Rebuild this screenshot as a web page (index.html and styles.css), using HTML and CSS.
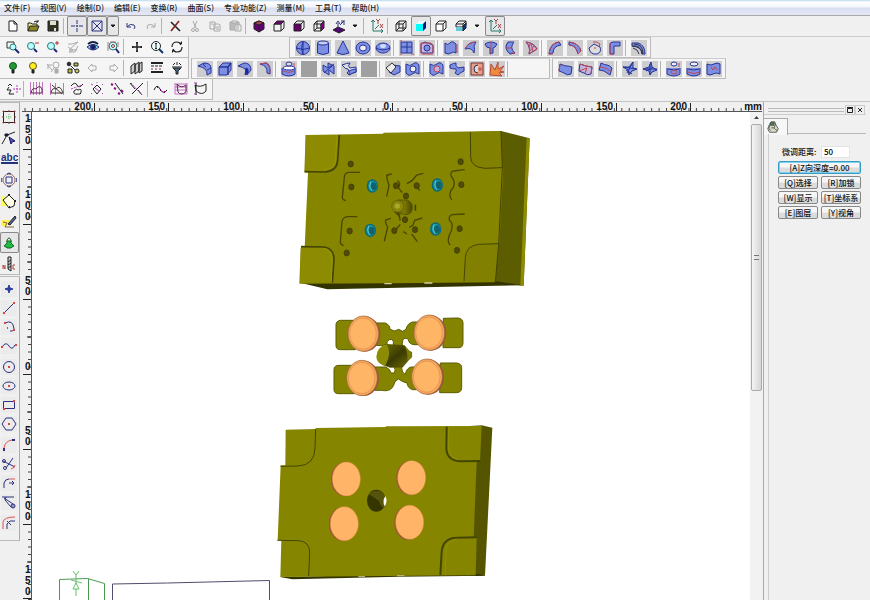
FILE: index.html
```html
<!DOCTYPE html>
<html lang="zh-CN">
<head>
<meta charset="utf-8">
<title>CAD</title>
<link rel="stylesheet" href="styles.css">
</head>
<body>
<nav class="menu">
<a href="#">文件(F)</a><a href="#">视图(V)</a><a href="#">绘制(D)</a><a href="#">编辑(E)</a><a href="#">变换(R)</a><a href="#">曲面(S)</a><a href="#">专业功能(Z)</a><a href="#">测量(M)</a><a href="#">工具(T)</a><a href="#">帮助(H)</a>
</nav>

<header class="bars">
<div class="row">
<div class="band open">
<button aria-label="新建"><svg viewBox="0 0 16 16"><path d="M4 3h5l3 3v7H4zM9 3v3h3" fill="#fff"/></svg></button>
<button aria-label="打开"><svg viewBox="0 0 16 16"><path d="M3 13V5h3l1 1h5v2" fill="#ee9"/><path d="M3 13l2-5h9l-2 5z" fill="#882"/><path d="M9 4q2-2 4 0M13 2v2h-2"/></svg></button>
<button aria-label="保存"><svg viewBox="0 0 16 16"><path d="M3 3h10v10H3z" fill="#332"/><path d="M5 3h6v4H5z" fill="#dee0d0" stroke="none"/><path d="M9 10h2v3H9z" fill="#ddd" stroke="none"/></svg></button>
<i class="sep"></i>
<button class="on" aria-label="十字光标"><svg viewBox="0 0 16 16" class="navy"><path d="M8 2v4M8 7v2M8 10v4M2 8h4M10 8h4M7 8h2"/></svg></button>
<button class="on" aria-label="捕捉"><svg viewBox="0 0 16 16" class="navy"><path d="M3 3h10v10H3zM3 3l10 10M13 3L3 13"/></svg></button>
<button class="drop on" aria-label="捕捉选项"><svg viewBox="0 0 8 16"><path d="M2 7h4L4 9z" fill="#111"/></svg></button>
<button aria-label="撤销"><svg viewBox="0 0 16 16" class="navy"><path d="M4 5v4h4M4 9q3-4 7-2 2 2 0 4"/></svg></button>
<button aria-label="重做"><svg viewBox="0 0 16 16" class="dim"><path d="M12 5v4H8M12 9Q9 5 5 7q-2 2 0 4"/></svg></button>
<i class="sep"></i>
<button aria-label="删除"><svg viewBox="0 0 16 16"><path d="M4 4l9 9" stroke="#222" stroke-width="1.6"/><path d="M12 3l-8 10" stroke="#822" stroke-width="1.6"/></svg></button>
<button aria-label="剪切"><svg viewBox="0 0 16 16" class="dim"><path d="M6 3l3 7M10 3l-3 7"/><circle cx="6" cy="12" r="1.5"/><circle cx="10" cy="12" r="1.5"/></svg></button>
<button aria-label="复制"><svg viewBox="0 0 16 16" class="dim"><path d="M3 4h5v7H3zM7 6h5l1 1v6H7zM9 9h3M9 11h3M4 6h2"/></svg></button>
<button aria-label="粘贴"><svg viewBox="0 0 16 16" class="dim"><path d="M3 4h9v8H3z" fill="#bbb"/><path d="M5 3h5v2H5zM8 7h6v6H8z" fill="#eee"/><path d="M9 9h3M9 11h3"/></svg></button>
<i class="sep"></i>
<button aria-label="着色视图"><svg viewBox="0 0 16 16"><path d="M3 5l5-2 5 2v6l-5 3-5-3z" fill="#607"/><path d="M3 5l5 2 5-2-5-2z" fill="#a45"/><path d="M8 7v7"/></svg></button>
<button aria-label="顶视图"><svg viewBox="0 0 16 16"><path d="M3 6h7v7H3zM10 6l3-3v7l-3 3"/><path d="M3 6l3-3h7l-3 3z" fill="#707"/></svg></button>
<button aria-label="前视图"><svg viewBox="0 0 16 16"><path d="M3 6l3-3h7v7l-3 3M13 3l-3 3"/><path d="M3 6h7v7H3z" fill="#606"/></svg></button>
<button aria-label="右视图"><svg viewBox="0 0 16 16"><path d="M3 6h7v7H3zM3 6l3-3h7M6 3v7h4M3 13l3-3"/><path d="M10 6l3-3v7l-3 3z" fill="#808"/></svg></button>
<button aria-label="工作平面"><svg viewBox="0 0 16 16"><path d="M2 12l5-3 7 3-6 3z" fill="#507"/><path d="M7 12V5M5 6l2-3 2 3M9 7l4-4M11 2v3M13 2v5" stroke="#337"/></svg></button>
<button class="drop" aria-label="平面选项"><svg viewBox="0 0 8 16"><path d="M2 7h4L4 9z" fill="#111"/></svg></button>
<i class="sep"></i>
<button aria-label="坐标轴"><svg viewBox="0 0 16 16"><path d="M4 2v11h10M2 4l2-2 2 2M12 11l2 2-2 2M6 11l4-4" stroke="#276"/><path d="M7 1l2 2 2-2M9 3v3M11 6l3 4M14 6l-3 4" stroke="#a44"/></svg></button>
<i class="sep"></i>
<button aria-label="线框"><svg viewBox="0 0 16 16"><path d="M3 6h7v7H3zM6 3h7v7H6zM3 6l3-3M10 6l3-3M10 13l3-3M3 13l3-3"/></svg></button>
<button class="on" aria-label="着色"><svg viewBox="0 0 16 16" class="flat"><path d="M3 6h7v7H3z" fill="#0ff"/><path d="M3 6l3-3h7l-3 3z" fill="#dff"/><path d="M10 6l3-3v7l-3 3z" fill="#018"/></svg></button>
<button aria-label="消隐"><svg viewBox="0 0 16 16"><path d="M3 6h7v7H3zM3 6l3-3h7l-3 3M13 3v7l-3 3" fill="#fff"/></svg></button>
<button aria-label="半着色"><svg viewBox="0 0 16 16"><path d="M3 6l3-3h7l-3 3zM3 6v3h7V6M13 3v4"/><path d="M3 9h7v4H3z" fill="#6cd" stroke="none"/><path d="M10 8l3-3v5l-3 3z" fill="#138"/></svg></button>
<button class="drop" aria-label="显示选项"><svg viewBox="0 0 8 16"><path d="M2 7h4L4 9z" fill="#111"/></svg></button>
<button class="on" aria-label="显示坐标"><svg viewBox="0 0 16 16"><path d="M4 2v11h10M2 4l2-2 2 2M12 11l2 2-2 2M6 11l4-4" stroke="#276"/><path d="M7 1l2 2 2-2M9 3v3M11 6l3 4M14 6l-3 4" stroke="#a44"/></svg></button>
</div>
</div>

<div class="row">
<div class="band">
<button aria-label="窗口缩放"><svg viewBox="0 0 16 16"><path d="M2 3h7v6H2z" stroke="#333"/><circle cx="8" cy="8" r="3" fill="#bff" stroke="#277"/><path d="M10 10l4 4" stroke="#227" stroke-width="2"/></svg></button>
<button aria-label="缩小"><svg viewBox="0 0 16 16"><circle cx="6" cy="7" r="3.500" fill="#bff" stroke="#277"/><path d="M9 10l3 3" stroke="#227" stroke-width="2"/><path d="M10 4h4" stroke="#a33"/></svg></button>
<button aria-label="放大"><svg viewBox="0 0 16 16"><circle cx="6" cy="7" r="3.500" fill="#bff" stroke="#277"/><path d="M9 10l3 3" stroke="#227" stroke-width="2"/><path d="M10 4h4M12 2v4" stroke="#a33"/></svg></button>
<button aria-label="上一视图"><svg viewBox="0 0 16 16" class="dim"><path d="M3 5h4l6-2-9 8h8M3 8l5 3-4 2h6l3-6"/></svg></button>
<button aria-label="观察"><svg viewBox="0 0 16 16" class="navy"><path d="M2 8q6-5 12 0-6 6-12 0" fill="#8ce"/><circle cx="8" cy="8" r="2.500" fill="#125"/><path d="M3 5q5-4 10 0" stroke-width="2" stroke="#124"/></svg></button>
<button aria-label="全部缩放"><svg viewBox="0 0 16 16"><circle cx="8" cy="7" r="4" fill="#bff" stroke="#377"/><path d="M3 3v9M13 3v5M5 3h6" stroke="#a77"/><path d="M11 10l3 4" stroke="#227" stroke-width="2"/><circle cx="8" cy="7" r="1.500" stroke="#a33"/></svg></button>
<i class="sep"></i>
<button aria-label="平移"><svg viewBox="0 0 16 16"><path d="M8 3v10M3 8h10" stroke-width="1.500"/><path d="M7 4l1-1 1 1zM7 12l1 1 1-1zM4 7L3 8l1 1zM12 7l1 1-1 1z" fill="#222"/></svg></button>
<button aria-label="动态缩放"><svg viewBox="0 0 16 16"><circle cx="7" cy="7" r="4.500" fill="#eff"/><path d="M7 4v6M6 5l1-1 1 1M6 9l1 1 1-1"/><path d="M10 10l4 4" stroke="#136" stroke-width="2"/></svg></button>
<button aria-label="旋转"><svg viewBox="0 0 16 16"><path d="M3 8q0-5 5-5 3 0 4 3M13 8q0 5-5 5-3 0-4-3" stroke-width="1.200"/><path d="M10 5h3V2zM6 11H3v3z" fill="#222" stroke="none"/></svg></button>
</div>
<div class="band start far">
<button class="s" aria-label="球"><svg viewBox="0 0 16 16"><circle cx="8" cy="8" r="6.500" class="f"/><path d="M1.500 8q6.500 3 13 0M8 1.500q-3 6 0 13M8 2v12"/></svg></button>
<button class="s" aria-label="圆柱"><svg viewBox="0 0 16 16"><path d="M2.500 3v10q5.500 3 11 0V3" class="f"/><ellipse cx="8" cy="3" rx="5.500" ry="2" fill="#c4cdf2"/></svg></button>
<button class="s" aria-label="圆锥"><svg viewBox="0 0 16 16"><path d="M8 1L2 13q6 3 12 0z" class="f"/></svg></button>
<button class="s" aria-label="圆环"><svg viewBox="0 0 16 16"><ellipse cx="8" cy="8" rx="7" ry="6" class="f"/><ellipse cx="8" cy="8" rx="3.500" ry="3" fill="#eee"/></svg></button>
<button class="s" aria-label="椭球"><svg viewBox="0 0 16 16"><ellipse cx="8" cy="8" rx="7" ry="5" class="f"/><ellipse cx="8" cy="6" rx="3" ry="2" fill="#cdf" stroke="none"/><path d="M1 8q7 4 14 0"/></svg></button>
<i class="sep"></i>
<button class="s" aria-label="平面"><svg viewBox="0 0 16 16"><path d="M2 2h11v11H2z" class="f"/><path d="M2 7h11M8 2v11"/><path d="M1 1h2M12 14h3M1 14h2" class="r"/></svg></button>
<button class="s" aria-label="裁剪平面"><svg viewBox="0 0 16 16"><path d="M2 13V4l4-2 8 3v8z" class="g"/><circle cx="8" cy="8" r="3" class="f"/><path d="M2 13V3h10l2 3v7M3 14h11" class="r"/></svg></button>
<i class="sep"></i>
<button class="s" aria-label="拉伸面"><svg viewBox="0 0 16 16"><path d="M2 3q3 3 5 0t6 1v9q-3-2-5 0t-6 0z" class="f"/><path d="M14 4v9" class="r"/></svg></button>
<button class="s" aria-label="直纹面"><svg viewBox="0 0 16 16"><path d="M2 9q3-7 11-7l-2 4q1 3 0 7-2-6-9-4z" class="f"/><path d="M2 9q3-7 11-7" class="r"/></svg></button>
<button class="s" aria-label="旋转面"><svg viewBox="0 0 16 16"><path d="M2 4q6-4 12 0-2 4-4 4v5l-3 1V8Q3 8 2 4z" class="f"/><path d="M8 2v12" class="r"/></svg></button>
<button class="s" aria-label="扫掠面"><svg viewBox="0 0 16 16"><path d="M5 2h6q-5 6 1 11l-5 1q-7-6-2-12z" class="f"/><path d="M3 8h6M10 3l1-1M8 13h4" class="r"/></svg></button>
<button class="s" aria-label="网格面"><svg viewBox="0 0 16 16"><path d="M3 2q8 1 11 7l-8 5Q8 7 3 2z" class="g"/><path d="M3 2q8 1 11 7l-8 5Q8 7 3 2zM7 4l-1 4M11 6l-4 5M8 4l2 7" class="r"/></svg></button>
<i class="sep"></i>
<button class="s" aria-label="单轨扫掠"><svg viewBox="0 0 16 16"><path d="M2 14Q3 3 12 2l2 3q-8 1-8 8z" class="f"/><path d="M2 14Q3 3 12 2M2 14h4" class="r"/></svg></button>
<button class="s" aria-label="双轨扫掠"><svg viewBox="0 0 16 16"><path d="M2 2q10 1 12 9l-3 3Q9 5 2 5z" class="f"/><path d="M2 2q10 1 12 9l-3 3Q9 5 2 5" class="r"/></svg></button>
<button class="s" aria-label="边界面"><svg viewBox="0 0 16 16"><path d="M2 8l5-4 6 3q2 5-3 7-7 1-8-6z" fill="#ddd"/><path d="M6 2q4-1 7 2l-1 3M8 7v2" class="r"/></svg></button>
<button class="s" aria-label="管道面"><svg viewBox="0 0 16 16"><path d="M3 14V5q0-3 3-3h7v4H7v8z" class="f"/><path d="M3 14h4M3 3v11" class="r"/></svg></button>
<i class="sep"></i>
<button class="s" aria-label="等距面"><svg viewBox="0 0 16 16"><path d="M1 3h6q7 2 7 11h-3Q11 7 1 6z" class="f"/><path d="M1 6q9-1 10 8M3 4q9 0 9 10M2 8q5 1 6 6" stroke="#334"/></svg></button>
</div>
</div>

<div class="row">
<div class="band">
<button aria-label="显示对象"><svg viewBox="0 0 16 16"><circle cx="8" cy="6" r="3.500" fill="#293" stroke="#152"/><path d="M7 10h2v3H7z" fill="#131"/></svg></button>
<button aria-label="点亮"><svg viewBox="0 0 16 16"><circle cx="8" cy="6" r="3.500" fill="#fe2" stroke="#552"/><path d="M7 10h2v3H7z" fill="#222"/></svg></button>
<button aria-label="拾取隐藏"><svg viewBox="0 0 16 16" class="dim"><path d="M2 4l5 6M3 9V5h4M6 12l4-5"/><circle cx="11" cy="5" r="3"/><path d="M10 9h3v4h-3z" fill="#aaa"/></svg></button>
<button aria-label="切换显示"><svg viewBox="0 0 16 16"><circle cx="4" cy="4" r="1.800" fill="#333"/><path d="M9 3h4v3H9zM3 9h4v4H3z" fill="#bb4"/><circle cx="12" cy="11" r="2" fill="#cc6"/><path d="M8 8l2 2M6 6l2 2"/></svg></button>
<button aria-label="后退"><svg viewBox="0 0 16 16" class="dim"><path d="M3 8l4-4v2h4v4H7v2z"/></svg></button>
<button aria-label="前进"><svg viewBox="0 0 16 16" class="dim"><path d="M13 8L9 4v2H5v4h4v2z"/></svg></button>
<i class="sep"></i>
<button aria-label="图层"><svg viewBox="0 0 16 16"><path d="M2 6l4-3v8l-4 3zM6 5l4-3v9l-4 3zM10 4l3-2v9l-3 2z" fill="#ccc"/></svg></button>
<button aria-label="线型"><svg viewBox="0 0 16 16"><path d="M2 3h12M2 12h12" stroke-width="2"/><path d="M2 6h12" stroke-dasharray="3 1"/><path d="M2 9h12" stroke-dasharray="2 2" stroke="#835"/></svg></button>
<button aria-label="过滤"><svg viewBox="0 0 16 16"><path d="M4 8h8l-3 3v3H7v-3z" fill="#468"/><path d="M4 5l2-2M8 5V2M12 5l-2-2M3 7h10"/></svg></button>
</div>
<div class="band start near">
<button class="s" aria-label="圆角过渡"><svg viewBox="0 0 16 16"><path d="M1 5l6-3q7 0 7 5v5l-4 2q1-7-9-9z" class="f"/><path d="M10 9l4-2M7 2q-2 2 2 4"/></svg></button>
<button class="s" aria-label="盒体"><svg viewBox="0 0 16 16"><path d="M2 6l4-4h8v7l-4 5H2z" class="f"/><path d="M2 6h9l3-4M11 6v8" stroke-width="1.500"/></svg></button>
<button class="s" aria-label="边过渡"><svg viewBox="0 0 16 16"><path d="M1 5l6-3q7 0 7 7l-4 5q1-7-9-9z" class="f"/><path d="M9 7l-1 7 3-2V8z" fill="#12259a"/></svg></button>
<button class="s" aria-label="变半径过渡"><svg viewBox="0 0 16 16"><path d="M3 3l6-1q5 1 4 11l-3-1q1-7-7-9z" class="f"/><path d="M3 3l6-1q4 1 4 11" class="r"/></svg></button>
<i class="sep"></i>
<button class="s" aria-label="抽壳"><svg viewBox="0 0 16 16"><path d="M1 7v6q7 4 13 0V7" class="f"/><ellipse cx="8" cy="7" rx="6" ry="2" fill="#fff"/><ellipse cx="8" cy="3" rx="3" ry="2" fill="#ddd"/><path d="M2 10q6 3 11 0M13 2v4" class="r"/></svg></button>
<button class="s blank" aria-label="备用一"><svg viewBox="0 0 16 16"></svg></button>
<button class="s" aria-label="面裁剪"><svg viewBox="0 0 16 16"><path d="M2 4l5 3V2l6 3v8l-5-4v5l-6-4z" class="f"/><path d="M7 7l6-4M3 12l8-7"/></svg></button>
<button class="s" aria-label="面延伸"><svg viewBox="0 0 16 16"><path d="M1 4q5-2 8-2-3 3 0 5l6-1v5q-4 1-7 3l-2-2q3-2 1-4-3 0-4-2z" fill="#ddd"/><path d="M8 10q4-2 7-2v3q-4 1-7 3z" class="f"/></svg></button>
<button class="s blank" aria-label="备用二"><svg viewBox="0 0 16 16"></svg></button>
<i class="sep"></i>
<button class="s" aria-label="旋转裁剪"><svg viewBox="0 0 16 16"><path d="M8 4l7 1v6l-6 3-5-3z" class="f"/><path d="M7 2l4 4-5 6-5-5z" fill="#eee" stroke="#333"/></svg></button>
<button class="s" aria-label="面打孔"><svg viewBox="0 0 16 16"><path d="M1 3q4 3 7 0t6 1v9q-4-3-7 0t-6-1z" class="f"/><circle cx="8" cy="8" r="3" fill="#eee"/></svg></button>
<i class="sep"></i>
<button class="s" aria-label="面补孔"><svg viewBox="0 0 16 16"><path d="M1 3q4 3 7 0t6 1v9q-4-3-7 0t-6-1z" class="f"/><circle cx="8" cy="8" r="3" class="g r"/></svg></button>
<button class="s" aria-label="面连接"><svg viewBox="0 0 16 16"><path d="M1 4q4-2 6-2-1 3 2 5l6-1v4q-3 1-6 4l-3-2q2-2 1-4-4 0-6-1z" class="f"/></svg></button>
<button class="s" aria-label="取消裁剪"><svg viewBox="0 0 16 16"><path d="M2 2h12v12H2z" fill="#e9a088" stroke="#733"/><path d="M9 4q-4 0-4 4t4 4" stroke="#235" fill="#ddd"/><path d="M9 8h4M11 6v4" class="r"/></svg></button>
<button class="s" aria-label="炸开"><svg viewBox="0 0 16 16"><path d="M1 14l1-11 4 6 3-8v7l6-3-4 5 4 1-5 1 3 3z" fill="#f08a40" stroke="#b64a30"/></svg></button>
<i class="sep"></i>
</div>
<div class="band start last">
<button class="s" aria-label="面一"><svg viewBox="0 0 16 16"><path d="M2 3q5 2 7 2t5 1l-1 7q-4 2-7-1-2-1-5-2z" class="f"/><path d="M2 3l-1 7" class="r"/></svg></button>
<button class="s" aria-label="面二"><svg viewBox="0 0 16 16"><path d="M2 3l6 2 6 1-1 7q-4 2-7-1l-5-2z" class="g"/><path d="M2 3l6 2 6 1-1 7M1 10l8-3-2 5" class="r"/></svg></button>
<button class="s" aria-label="面三"><svg viewBox="0 0 16 16"><path d="M3 2q4 2 6 2t5 3l-2 7-6-4-5-1z" class="f"/><path d="M2 6q8 1 11 5" class="r"/></svg></button>
<i class="sep"></i>
<button class="s" aria-label="相交一"><svg viewBox="0 0 16 16"><path d="M1 6l6 0 4-5v6l4 1-5 2-3 4-1-5z" class="f"/><path d="M1 6l13 2M11 1L5 12M4 9l6 4"/></svg></button>
<button class="s" aria-label="相交二"><svg viewBox="0 0 16 16"><path d="M1 8l6-2 2-5 1 5 5 3-5 2-2 3-1-4z" class="f"/><path d="M2 8h13M8 3v11M4 10l7-4"/></svg></button>
<i class="sep"></i>
<button class="s" aria-label="实体一"><svg viewBox="0 0 16 16"><path d="M1 7v6q7 4 13 0V7" class="f"/><ellipse cx="8" cy="3" rx="3" ry="2" fill="#eee"/><path d="M2 8q6 2 11 0"/><ellipse cx="8" cy="11" rx="3" ry="2" class="r"/><path d="M13 2v4" class="r"/></svg></button>
<button class="s" aria-label="实体二"><svg viewBox="0 0 16 16"><path d="M1 7v6q7 4 13 0V7" class="f"/><ellipse cx="8" cy="3" rx="4" ry="2" fill="#eee"/><path d="M2 8q6 2 11 0"/><path d="M2 11q6 3 12 0" class="r"/></svg></button>
<button class="s" aria-label="实体三"><svg viewBox="0 0 16 16"><path d="M1 3q4 2 7 0t6 0v10q-4-2-7 0t-6 0z" class="f"/><path d="M5 6l2 3 2-3 2 3" class="r"/></svg></button>
</div>
</div>

<div class="row">
<div class="band">
<button aria-label="点变换"><svg viewBox="0 0 16 16"><path d="M3 5l2-2 2 2M4 6l-2 3h4l-2 4h5"/><path d="M12 4v9M8 8h8" stroke="#b4b" stroke-dasharray="2 1"/></svg></button>
<i class="sep"></i>
<button aria-label="阵列一"><svg viewBox="0 0 16 16" class="pink"><path d="M1.500 1v13M4.500 1v13M7.500 1v13M10.500 1v13M13.500 1v13"/><path d="M2 12q1-6 5-4 4-5 6 0v4z" stroke="#625"/></svg></button>
<button aria-label="阵列二"><svg viewBox="0 0 16 16" class="pink"><path d="M1.500 2v12M14.500 2v12M6.500 2v12"/><path d="M2 12q1-6 5-4 4-5 7 4zM3 4l10 9" stroke="#433"/></svg></button>
<button aria-label="轮廓"><svg viewBox="0 0 16 16"><path d="M2 5q4-5 6-1t6-1M5 10q3-3 4-1 4-2 3 2 0 3-3 2-5 1-4-3"/><path d="M2 8l11-4" stroke="#b4b" stroke-dasharray="2 1"/></svg></button>
<button aria-label="点阵"><svg viewBox="0 0 16 16"><path d="M4 8l4-4 4 4-4 5z"/><path d="M2 3l2 1M8 1v1M13 3l1 1M2 12l1 1M13 12l1 1M6 7l4 3" stroke="#b4b"/></svg></button>
<button aria-label="等分"><svg viewBox="0 0 16 16"><path d="M6 2l8 11"/><path d="M2 3l2 1M5 7l2 1M9 12l2 1M12 9l2 2" stroke="#818" stroke-width="2"/></svg></button>
<button aria-label="打断"><svg viewBox="0 0 16 16"><path d="M1 2l5 6M9 9l4 5M14 2L3 13"/><path d="M2 2l11 12" stroke="#a3a" stroke-dasharray="2 1"/></svg></button>
<i class="sep"></i>
<button aria-label="样条"><svg viewBox="0 0 16 16"><path d="M1 9q3-7 6-1t7 1"/><path d="M4 6h1M7 9h1M11 11h1" stroke="#707" stroke-width="2"/></svg></button>
<button aria-label="曲线投影"><svg viewBox="0 0 16 16" class="pink"><path d="M2 2v11h12V2M2 3h12M2 6h12M2 9h12"/><path d="M4 3q4 5 9 1v7q-5 4-8 0z" stroke="#625"/></svg></button>
<button aria-label="曲线裁剪"><svg viewBox="0 0 16 16"><path d="M3 2v12M2 4q5 3 11-1v7q-4 5-10 0z"/><path d="M1 2h3M1 13h3" stroke="#a4a"/></svg></button>
</div>
</div>
</header>

<main>
<aside class="side">
<div class="set">
<button aria-label="选择"><svg viewBox="0 0 16 16"><path d="M2.500 2.500h11v11h-11z"/><path d="M2 2h1v1H2zM7 2h2M7 14h2M13 2h1v1h-1zM2 13h1v1H2zM13 13h1v1h-1zM2 7v2M14 7v2" stroke="#933"/><path d="M8 5v6M5 8h6" stroke="#5b5" stroke-dasharray="1 1"/></svg></button>
<button aria-label="节点编辑"><svg viewBox="0 0 16 16"><path d="M1 14L6 5l8-3"/><path d="M4 4h3v2H4z" fill="#116"/><path d="M8 7l6 4-3 1-1 2z" fill="#55b" stroke="#116"/></svg></button>
<button aria-label="文字"><strong>abc</strong></button>
<button aria-label="变换"><svg viewBox="0 0 16 16" class="navy"><path d="M5 5h6v6H5z"/><circle cx="8" cy="8" r="6" stroke="#966"/><path d="M6 2l2-1 2 1M1 6l-1 2 1 2M15 6l1 2-1 2M6 14l2 1 2-1"/></svg></button>
<button aria-label="测量"><svg viewBox="0 0 16 16"><path d="M0 3h3l5 10H0z" fill="#ff4" stroke="none"/><path d="M2 7l6-5 6 6-1 5-5 2z" fill="#fffde8"/><path d="M7 2h2M13 8h2M2 7h1M8 14h1" stroke-width="2"/></svg></button>
<button aria-label="绘图"><svg viewBox="0 0 16 16"><path d="M1 6h8l-3 6H0z" fill="#fe5" stroke="none"/><path d="M7 10l7-8 1 2-6 7z" fill="#569"/><path d="M2 8l4 1-2 4h9" stroke="#863"/></svg></button>
<button class="on" aria-label="虚拟加工"><svg viewBox="0 0 16 16"><path d="M6 7V5q2-4 4 0v2" stroke="#162"/><path d="M6 6h4v2l3 3-2 1-1 1H6l-1-1-2-1 3-3z" fill="#2b4" stroke="#162"/></svg></button>
<button aria-label="刀具"><svg viewBox="0 0 16 16"><path d="M7 1v12l3 2V1zM7 6l3-2M7 9l3-2M7 12l3-2" fill="#ccc"/><path d="M2 9v4M2 9l2 4V9M14 9h-2v4h2" stroke="#a44"/></svg></button>
</div>
<div class="set low">
<button aria-label="点"><svg viewBox="0 0 16 16"><path d="M8 4l1 3 3 1-3 1-1 3-1-3-3-1 3-1z" fill="#2b3ba0" stroke="#2b3ba0"/></svg></button>
<button aria-label="直线"><svg viewBox="0 0 16 16" class="navy"><path d="M3 13L13 3"/><path d="M12 3h2M2 13h2" class="r2"/></svg></button>
<button aria-label="圆弧"><svg viewBox="0 0 16 16" class="navy"><path d="M4 4q8-4 9 6-1 3-4 2"/><path d="M3 4h2M12 11h2M6 9h1" class="r2"/></svg></button>
<button aria-label="样条曲线"><svg viewBox="0 0 16 16" class="navy"><path d="M1 9q4-6 7-1t6-1"/><path d="M0 9h2M14 7h2" class="r2"/></svg></button>
<button aria-label="圆"><svg viewBox="0 0 16 16" class="navy"><circle cx="8" cy="8" r="5.500"/><path d="M7 8h2" class="r2"/></svg></button>
<button aria-label="椭圆"><svg viewBox="0 0 16 16" class="navy"><ellipse cx="8" cy="8" rx="6" ry="4"/><path d="M7 8h2" class="r2"/></svg></button>
<button aria-label="矩形"><svg viewBox="0 0 16 16" class="navy"><path d="M2.500 4.500h11v7h-11z"/><path d="M2 12h2M12 4h2" class="r2"/></svg></button>
<button aria-label="多边形"><svg viewBox="0 0 16 16" class="navy"><path d="M5 2h6l4 6-4 6H5L1 8z"/><path d="M7 8h2" class="r2"/></svg></button>
<button aria-label="圆角"><svg viewBox="0 0 16 16" class="navy"><path d="M3 14v-3M11 3h3" stroke-width="2"/><path d="M3 11q1-7 8-8" stroke="#d55"/></svg></button>
<button aria-label="修剪"><svg viewBox="0 0 16 16" class="navy"><path d="M2 5l12 6M12 2L5 12"/><circle cx="3" cy="5" r="1.500"/><circle cx="4" cy="12" r="1.500"/><path d="M10 13q4-1 4-4" stroke="#d55"/></svg></button>
<button aria-label="延伸"><svg viewBox="0 0 16 16" class="navy"><path d="M3 13V8q1-4 5-4M8 8h5M11 6l2 2-2 2"/><path d="M8 4h6" stroke="#d55"/></svg></button>
<button aria-label="打断曲线"><svg viewBox="0 0 16 16" class="navy"><path d="M1 3h12M3 4l9 6M5 3l-1 3 6 7"/><circle cx="12" cy="12" r="2" fill="#99b"/></svg></button>
<button aria-label="等距线"><svg viewBox="0 0 16 16" class="navy"><path d="M2 14V7q1-5 12-5" stroke="#d55"/><path d="M6 14V9l3-3h5M6 6l4 4"/></svg></button>
</div>
</aside>

<section class="view">
<svg class="hruler" aria-label="水平标尺">
<path d="M0 9.500H740" stroke="#555"/>
<path d="M2.500 7.500H731" stroke="#444" stroke-width="3" stroke-dasharray="1 6.460"/>
<path d="M72.500 1v8M146.500 1v8M221.500 1v8M295.500 1v8M370.500 1v8M444.500 1v8M519.500 1v8M594.500 1v8M668.500 1v8"/>
<g text-anchor="end"><text x="69" y="8">200</text><text x="143" y="8">150</text><text x="218" y="8">100</text><text x="292" y="8">50</text><text x="367" y="8">0</text><text x="441" y="8">50</text><text x="516" y="8">100</text><text x="591" y="8">150</text><text x="665" y="8">200</text><text x="740" y="8">mm</text></g>
</svg>
<svg class="vruler" aria-label="垂直标尺">
<path d="M9.500 0V488" stroke="#555"/>
<path d="M7.500 7V488" stroke="#444" stroke-width="3" stroke-dasharray="1 6.500"/>
<path d="M1 37.500h8M1 112.500h8M1 187.500h8M1 262.500h8M1 337.500h8M1 412.500h8M1 486.500h8M5 75h4M5 150h4M5 225h4M5 300h4M5 375h4M5 450h4"/>
<text><tspan x="3" y="10">1</tspan><tspan x="3" y="21">5</tspan><tspan x="3" y="32">0</tspan></text>
<text><tspan x="3" y="86">1</tspan><tspan x="3" y="97">0</tspan><tspan x="3" y="108">0</tspan></text>
<text><tspan x="3" y="172">5</tspan><tspan x="3" y="183">0</tspan></text>
<text x="3" y="258">0</text>
<text><tspan x="3" y="322">5</tspan><tspan x="3" y="333">0</tspan></text>
<text><tspan x="3" y="386">1</tspan><tspan x="3" y="397">0</tspan><tspan x="3" y="408">0</tspan></text>
<text><tspan x="3" y="461">1</tspan><tspan x="3" y="472">5</tspan><tspan x="3" y="483">0</tspan></text>
</svg>
<div class="canvas">
<svg viewBox="32 112 718 488" preserveAspectRatio="xMinYMin meet" role="img" aria-label="模具模型">
<defs>
<linearGradient id="pin" x1="0" x2="1"><stop offset="0" stop-color="#6b6a06"/><stop offset=".45" stop-color="#7d7a06"/><stop offset="1" stop-color="#4a4800"/></linearGradient>
<linearGradient id="sprue" x1="0" x2="1" y1="0" y2="1"><stop offset="0" stop-color="#6d6c00"/><stop offset=".5" stop-color="#3b3a04"/><stop offset="1" stop-color="#737200"/></linearGradient>
<g id="insert"><ellipse rx="17" ry="20" fill="#086a78"/><ellipse cx="1" rx="13" ry="16" fill="#1c98a6"/><ellipse cx="4" cy="1" rx="9" ry="12" fill="#11616f"/><path d="M-5-14Q-12 0-2 14" stroke="#5cc5ca" fill="none" stroke-width="3"/></g>
<ellipse id="hole" rx="8" ry="9" fill="#504b08" stroke="#393600" stroke-width="2"/>
<g id="disc"><ellipse cx="5" cy="1" rx="46" ry="53" fill="#9a5638"/><ellipse rx="46" ry="53" fill="#f2a75d" stroke="#a5623c" stroke-width="2"/><ellipse cx="-1" rx="40" ry="47" fill="#ffb566" stroke="#dc8d4e" stroke-width="2"/></g>
<g id="coin"><ellipse cx="-5" cy="1" rx="41" ry="51" fill="#a0503c"/><ellipse rx="42" ry="51" fill="#ffb467" stroke="#dd8d45" stroke-width="2" stroke-dasharray="4 2"/></g>
</defs>

<g transform="translate(290 120) scale(.33333)">
<path d="M633 33l86 22-18 442-90-9z" fill="#5c5c00"/>
<path d="M710 54l9 2-18 441-10-1z" fill="#8e8d00"/>
<path d="M30 488l585-5 82 13-115 2-470 10z" fill="#333300"/>
<path d="M47 45l232-4 2-3 195-3 157-2 4 111 3 2-12 225-9 2-5 114-303 3-283 1 4-108h12l10-225-11-1z" fill="#868500"/>
<path d="M47 45h97l-5 76q-2 32-35 34l-59 1zM33 380l70 1q27 6 24 36l-3 70-94 1z" fill="#8d8b02"/>
<path d="M541 36l92-3 4 111-52 1q-42-2-43-34zM627 371l-60 2q-37 3-39 40l-5 71 93-1z" fill="#818000"/>
<g fill="none" stroke="#454400" stroke-width="3"><path d="M148 45l-5 76q-2 32-39 35l-60-1M33 380l70 1q29 5 29 36l-5 71" stroke-width="5"/><path d="M141 47l-4 69q-1 31-35 34M124 485l2-70q-2-26-27-30" stroke="#999700"/><path d="M541 36l1 76q1 30 43 33l52-2M627 371l-62 2q-37 5-39 40l-4 71M633 33l4 111-11 228-10 116"/></g>
<g fill="none" stroke="#494700" stroke-width="4"><path d="M210 157h-32q-14 0-15 15l-6 60q0 8 11 10M202 290h-25q-19 0-21 15l-5 60q0 8 10 12M524 149l-33 4q-10 0-8 15 12 14 9 27 0 8-9 16-8 20 3 28M524 282l-37 2q-13 4-8 18 10 8 7 20 0 12-8 23-8 22 3 30M305 162l-15 4q2 17 7 30l-7 34M302 295l-15 5q-2 8 6 21l-10 43M400 160l-20 5-14 17-15 9M322 182q12 6 3 22l12 14M397 294l-23 7-5 15-11 6M331 285l-17-12M331 313l-17 20M375 195l15 17M365 342l17 23M314 275q18 12 16 27M340 335l11 7"/></g>
<use href="#hole" x="182" y="132"/><use href="#hole" x="512" y="125"/><use href="#hole" x="170" y="399"/><use href="#hole" x="501" y="391"/><use href="#hole" x="184" y="201"/><use href="#hole" x="514" y="194"/><use href="#hole" x="179" y="333"/><use href="#hole" x="509" y="326"/><use href="#hole" x="318" y="197"/><use href="#hole" x="380" y="197"/><use href="#hole" x="348" y="228"/><use href="#hole" x="345" y="299"/><use href="#hole" x="313" y="332"/><use href="#hole" x="375" y="329"/>
<path d="M323 240h27q17 4 17 23 0 21-22 21l-23-8z" fill="url(#pin)" stroke="#4a4800" stroke-width="2"/><circle cx="323" cy="259" r="18" fill="#89860a" stroke="#5b5900" stroke-width="2"/><circle cx="322" cy="258" r="8" fill="#aaa72b"/><path d="M376 254v18" stroke="#474600" stroke-width="5"/>
<use href="#insert" x="247" y="198"/><use href="#insert" x="442" y="195"/><use href="#insert" x="241" y="331"/><use href="#insert" x="437" y="327"/>
<path d="M283 491h22M403 489h24" stroke="#d4d09a" stroke-width="4"/>
</g>

<g transform="translate(320 305) scale(.33333)">
<g fill="#858400" stroke="#5b5c00" stroke-width="3">
<path d="M61 46h45v88H62q-15 0-14-14V60q0-12 13-14zM370 40l44-1q15 2 15 15v61q-1 13-12 13h-48zM57 181h47v85H56q-14 0-14-12v-60q0-13 15-13zM361 174h49q15 2 15 14v60q0 14-15 15h-51z"/>
<path d="M165 54h30q15 5 15 19l14 5 12-5 12 6 10-6q4-18 20-22h30v68h-26q-16-2-17-16-8-6-13-2-6 4-5 22h-27v-14q-4-8-12-5-10 5-7 15-20 5-36 2z"/>
<path d="M165 186h32q14 6 16 18h10q6-10-3-22h26q-3 20 10 26 4-20 18-22h30v68h-26q-15-4-17-20l-12-4-14-8-10 8q-4 14-10 20-10 10-30 6h-20z"/>
</g>
<path d="M196 118l58 4 12 16 9 4v14l-10 10-17 20-38 1-22-8z" fill="url(#sprue)" stroke="#454600" stroke-width="2"/><path d="M200 118q17 26-4 64-26-6-27-26 1-30 31-38z" fill="#8c8b04"/><path d="M252 121q12 12 23 22v12l-13 14q3-26-10-48z" fill="#7c7b04"/>
<use href="#disc" x="130" y="86"/><use href="#disc" x="328" y="83"/><use href="#disc" x="126" y="219"/><use href="#disc" x="321" y="215"/>
</g>

<g transform="translate(265 415) scale(.33333)">
<path d="M615 33l35-2 32 7-22 444-45 1z" fill="#555500"/>
<path d="M45 486l580-12 36 8-260 3-319 8z" fill="#333300"/>
<path d="M62 44l90-2v-3l210-3 1-2 287-1-5 106-10 2-9 226 9 2-3 112-271 2-315 3 3-110-11-1 9-224h14z" fill="#868500"/>
<g fill="none" stroke="#444600" stroke-width="3"><path d="M152 42l-2 57q-1 52-51 54l-52 1M37 376l65 1q33 3 32 38l-3 68"/><path d="M545 35l-1 65q1 36 40 39l62-1M635 367l-59 1q-43 1-46 42l-4 70" stroke-width="6"/><path d="M551 36v66q4 27 29 31M541 478l2-70q1-31 32-36" stroke="#919100"/></g>
<use href="#coin" x="244" y="192"/><use href="#coin" x="440" y="188"/><use href="#coin" x="238" y="326"/><use href="#coin" x="434" y="322"/>
<ellipse cx="334" cy="257" rx="28" ry="33" fill="#353500"/><path d="M312 238q17-20 44-4l6 20-5 26q-12-7-15-22-14-10-30-20z" fill="#55540a"/><path d="M361 243q-10 16-2 31 10-15 2-31z" fill="#fff"/>
<path d="M280 485h20M396 482h22" stroke="#b2b17a" stroke-width="4"/>
</g>
<g fill="none" stroke="#4a9a50"><path d="M59.500 600v-20.500l28-1 17 5V600M88.500 579v21"/><path d="M73 571l3 4 3-4M76 575v9M71 580l11 3M76 583l-3 6h6zM76 589v7" stroke="#62c267"/></g>
<path d="M112.500 600v-16l55-1 102-2.500V600" fill="none" stroke="#4e4e6d"/>
</svg>
</div>
<div class="scroll"><svg viewBox="0 0 11 12"><path d="M3 7h5L5.500 4z" fill="#444" stroke="none"/></svg><div class="track"><div class="thumb"><i></i></div></div></div>
</section>

<aside class="panel">
<div class="grip"><i></i><button aria-label="还原"><svg viewBox="0 0 8 8"><path d="M1.500 2.500h5v4h-5zM1 1.500h6"/></svg></button><button aria-label="关闭"><svg viewBox="0 0 8 8"><path d="M2 2l4 4M6 2L2 6"/></svg></button></div>
<div class="tabs"><button class="tab" aria-label="加工设置"><svg viewBox="0 0 16 16"><path d="M4 5l2-3h4l1 3 3 5-2 4H4l-2-4z" fill="#ddd8c4" stroke="#555"/><path d="M5 3h4v3H5z" fill="#675" stroke="#354"/><path d="M9 3q3 1 1 4t3 5M4 6q-2 4 1 6M6 9h3" stroke="#354"/></svg></button></div>
<form class="controls">
<label for="step">微调距离:</label><input id="step" value="50">
<button type="button" class="wide">[A]Z向深度=0.00</button>
<button type="button">[Q]选择</button><button type="button">[R]加锁</button>
<button type="button">[W]显示</button><button type="button">[T]坐标系</button>
<button type="button">[E]图层</button><button type="button">[Y]视角</button>
</form>
</aside>
</main>
</body>
</html>
```
FILE: styles.css
```css
* { box-sizing: border-box; }
body {
  margin: 0;
  min-height: 100vh;
  display: flex;
  flex-direction: column;
  background: #f0f0f0;
  color: #111;
  font: 8px/12px "Noto Sans CJK SC", sans-serif;
}
button {
  margin: 0;
  padding: 0;
  border: 0;
  background: none;
  color: inherit;
  font: inherit;
}
svg {
  display: block;
  fill: none;
  stroke: #222;
}

.menu {
  display: flex;
  align-items: center;
  gap: 10px;
  height: 16px;
  padding: 1px 4px 0;
  background: linear-gradient(#b9d7ea 0, #fff 2px, #f4f6fc 7px, #dadff0 8px, #e2e6f5 14px);
  border-bottom: 1px solid #aaa;
  font-weight: 500;
}
.menu a { color: #222; text-decoration: none; white-space: nowrap; }

.bars { padding-bottom: 1px; border-bottom: 1px solid #c4c4c4; }
.row { display: flex; height: 21px; }
.band {
  display: flex;
  align-items: center;
  padding-left: 3px;
  padding-right: 1px;
  background: #f5f5f5;
  border-right: 1px solid #bbb;
  border-bottom: 1px solid #bbb;
}
.band.open { border-right: 0; border-bottom: 0; background: none; }
.row:first-child { border-bottom: 1px solid #ccc; }
.band.start { border-left: 1px solid #bbb; border-top: 1px solid #ccc; }
.band.far { margin-left: 100px; }
.band.near { margin-left: 2px; padding-right: 38px; }
.band.last { margin-left: 2px; }
.band button { flex: none; width: 20px; height: 20px; padding: 2px; }
.band svg { width: 16px; height: 16px; }
.band .drop { width: 12px; padding: 2px; margin-right: 2px; }
.band .drop svg { width: 8px; }
.on {
  background: #e6e6e8;
  border-radius: 2px;
  box-shadow: inset 0 0 0 1px #8a8a8a;
}
.sep { flex: none; width: 4px; height: 16px; border-left: 1px solid #b4b4b4; }
.navy { stroke: #2b3080; }
.dim { stroke: #aaa; }
.flat { stroke: none; }
.pink { stroke: #c273c2; }
.s svg { background: #cdcdd0; stroke: #26349a; }
.blank svg { background: #a0a0a0; }
.f { fill: #7c8fe2; }
.g { fill: #c5b5dd; }
.r { stroke: #bf4655; }
.r2 { stroke: #d44; stroke-width: 2; }

main { flex: 1; display: flex; }
.side { flex: none; width: 22px; }
.set {
  display: flex;
  flex-direction: column;
  width: 20px;
  padding: 3px 0 0;
  border-top: 1px solid #bbb;
  border-right: 1px solid #aaa;
  border-bottom: 1px solid #bbb;
}
.set button { width: 19px; height: 21px; padding: 2px 1px; }
.set svg { width: 16px; height: 16px; }
.set strong {
  display: block;
  color: #22307d;
  font: bold 10px/9px "Liberation Sans", sans-serif;
  border-bottom: 2px solid #22307d;
}
.low { padding: 2px 0 8px; margin-top: 1px; }
.low button { height: 19px; padding: 1px; }
.low svg { background: #ebebeb; }
.low button:nth-child(4n + 5) { margin-top: 2px; }

.view {
  flex: 1;
  display: grid;
  grid-template: 10px 1fr / 10px 1fr 13px;
  min-width: 0;
}
.hruler { grid-column: 1 / 4; width: 100%; height: 10px; overflow: hidden; }
.vruler { width: 10px; height: 100%; }
.view text {
  fill: #111;
  stroke: none;
  font: bold 10px "Liberation Sans", sans-serif;
}
.canvas { background: #fff; min-width: 0; }
.canvas > svg { width: 100%; height: auto; stroke: none; }
.scroll {
  display: flex;
  flex-direction: column;
  padding: 0 1px;
  background: #f2f2f2;
}
.scroll svg { width: 11px; height: 12px; }
.track { flex: 1; display: flex; flex-direction: column; }
.thumb {
  height: 56%;
  display: grid;
  place-items: center;
  border: 1px solid #aaa;
  border-radius: 2px;
  background: linear-gradient(90deg, #f5f5f5, #d5d5d8);
}
.thumb i { width: 5px; height: 5px; border: solid #777; border-width: 1px 0; }

.panel {
  flex: none;
  width: 107px;
  border-left: 1px solid #aaa;
}
.grip { display: flex; align-items: center; gap: 2px; height: 12px; padding: 3px 6px 0 4px; }
.grip i { flex: 1; height: 4px; border: solid #bbb; border-width: 1px 0; }
.grip button { width: 8px; height: 8px; box-shadow: 0 0 0 1px #ccc; }
.grip svg { width: 8px; height: 8px; }
.tabs { height: 20px; padding-top: 3px; border-top: 1px solid #ccc; border-bottom: 1px solid #bbb; margin-right: 4px; }
.tab {
  display: block;
  width: 24px;
  height: 17px;
  padding: 0 2px;
  background: #f7f7f7;
  border: 1px solid #aaa;
  border-width: 1px 1px 0 0;
}
.tab svg { width: 14px; height: 14px; }
.controls {
  display: grid;
  grid-template-columns: 40px 40px;
  gap: 3px;
  margin: 0 4px 0 4px;
  padding: 12px 0 0 9px;
  border-left: 1px solid #ccc;
  min-height: 466px;
  align-content: start;
  font-weight: 500;
}
.controls label { padding-left: 4px; white-space: nowrap; }
.controls input {
  width: 29px;
  height: 12px;
  padding: 0 2px;
  border: 1px solid #e3e3e3;
  background: #fff;
  font: inherit;
}
.controls button {
  height: 13px;
  margin-bottom: -1px;
  border: 1px solid #888;
  border-radius: 2px;
  background: linear-gradient(#f6f6f6 45%, #dcdcdc 55%);
  line-height: 11px;
  white-space: nowrap;
}
.controls .wide {
  grid-column: 1 / 3;
  border-color: #3a9cc4;
  box-shadow: inset 0 0 0 1px #7fd0ee;
}
```
